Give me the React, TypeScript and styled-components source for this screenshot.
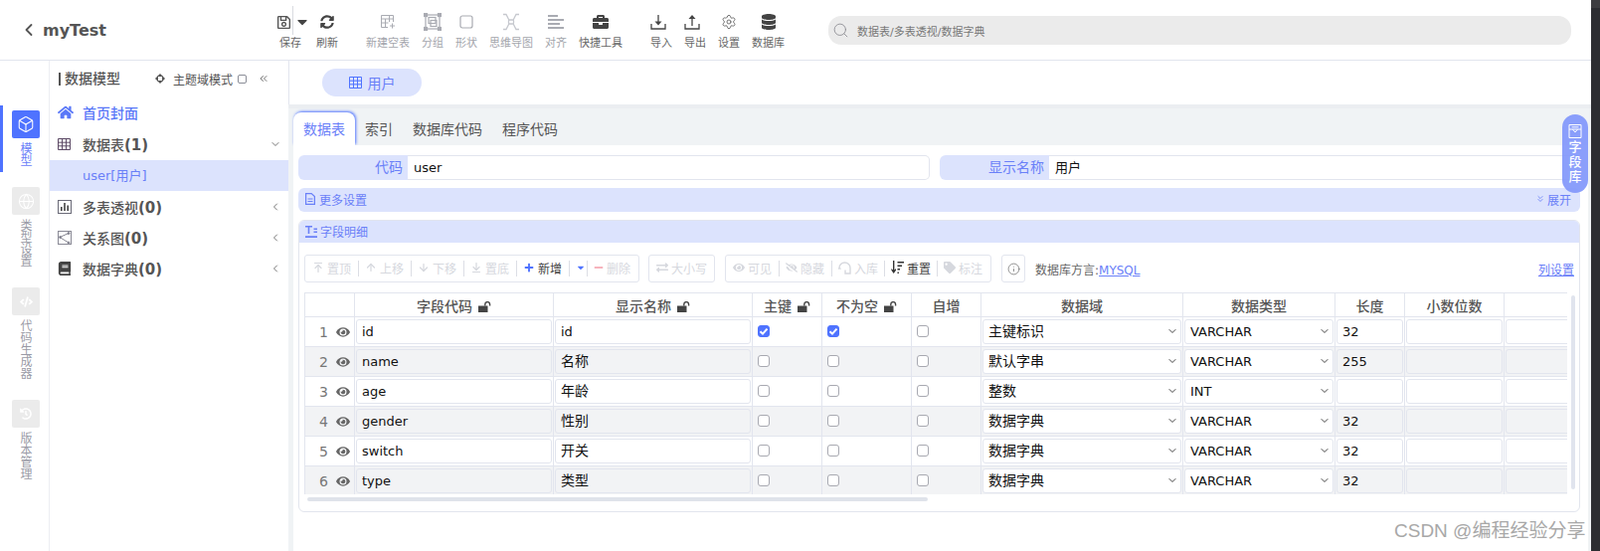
import React from "react";
import styled, { createGlobalStyle } from "styled-components";
import {
  FaHome, FaSyncAlt, FaBriefcase, FaDatabase, FaPlus, FaMinus, FaExchangeAlt, FaEye, FaEyeSlash,
  FaTag, FaBook, FaRegSave, FaCaretDown, FaCode, FaHistory,
} from "react-icons/fa";
import {
  ArrowUpToLine, ArrowUp, ArrowDown, ArrowDownToLine, Box, Globe, Info, Settings, Search, ChevronLeft, ChevronDown,
  ChevronsLeft, ChevronsDown,
} from "lucide-react";

const BLUE = "#4f73ff";
const SOFT = "#dce3fd";
const TEXTBLUE = "#6a80f8";
const LINE = "#e2e5ee";

const Global = createGlobalStyle`
  html, body { margin: 0; padding: 0; background: #fff; overflow: hidden; }
  body, input, select { font-family: "DejaVu Sans", "Noto Sans CJK SC", sans-serif; }
  * { box-sizing: border-box; }
`;

const Page = styled.div`
  display: flex;
  width: 1609px;
  height: 554px;
  position: relative;
  overflow: hidden;
`;
const Main = styled.div`
  width: 1600px;
  display: flex;
  flex-direction: column;
`;
const WindowEdge = styled.div`
  width: 9px;
  background: #2c2d31;
  border-top: 8px solid #3d3d40;
`;

/* ---------- header ---------- */
const Header = styled.header`
  height: 61px;
  flex: none;
  display: flex;
  align-items: flex-start;
  border-bottom: 1px solid ${LINE};
`;
const Brand = styled.div`
  width: 278px;
  height: 60px;
  padding-left: 19px;
  display: flex;
  align-items: center;
  gap: 4px;
  color: #555;
  font-size: 16px;
  font-weight: 700;
`;
const ToolRow = styled.div<{ $ml?: number }>`
  display: flex;
  gap: 12px;
  margin-left: ${(p) => p.$ml ?? 0}px;
  padding-top: 13px;
`;
const Tool = styled.div<{ $off?: boolean }>`
  display: flex;
  flex-direction: column;
  align-items: center;
  gap: 6px;
  color: ${(p) => (p.$off ? "#a9abb2" : "#444")};
  svg { display: block; }
`;
const ToolIcon = styled.div<{ $dx?: number }>`
  height: 18px;
  display: flex;
  align-items: center;
  justify-content: center;
  position: relative;
  margin-left: ${(p) => p.$dx ?? 0}px;
`;
const SaveDivider = styled.span`
  position: absolute;
  left: 16px;
  top: -7px;
  width: 1px;
  height: 29px;
  background: #d9dbe0;
`;
const ToolLabel = styled.span<{ $off?: boolean }>`
  font-size: 11px;
  line-height: 14px;
  white-space: nowrap;
  color: ${(p) => (p.$off ? "#a3a5ac" : "#666")};
`;
const SearchBar = styled.div`
  width: 747px;
  height: 29px;
  margin: 16px 0 0 44px;
  padding-left: 4px;
  border-radius: 13px;
  background: #ebebeb;
  display: flex;
  align-items: center;
  gap: 8px;
  color: #8a8a90;
  font-size: 11px;
  span { color: #777; }
`;

/* ---------- body ---------- */
const Body = styled.div`
  flex: 1;
  display: flex;
  min-height: 0;
`;
const Rail = styled.nav`
  width: 50px;
  flex: none;
  padding-top: 45px;
  border-right: 1px solid #eceef2;
  display: flex;
  flex-direction: column;
  gap: 10px;
`;
const RailItem = styled.div<{ $active?: boolean }>`
  padding: 5px 0 5px 3px;
  border-left: 3px solid ${(p) => (p.$active ? BLUE : "transparent")};
  display: flex;
  flex-direction: column;
  align-items: center;
  width: 46px;
  gap: 5px;
`;
const RailBox = styled.div<{ $active?: boolean }>`
  width: 28px;
  height: 28px;
  border-radius: 2px;
  background: ${(p) => (p.$active ? BLUE : "#ebebeb")};
  color: #fff;
  display: flex;
  align-items: center;
  justify-content: center;
`;
const RailLabel = styled.div<{ $active?: boolean }>`
  width: 12px;
  font-size: 12px;
  line-height: 12px;
  margin-left: 1px;
  color: ${(p) => (p.$active ? TEXTBLUE : "#9a9ba6")};
`;

const Side = styled.aside`
  width: 240px;
  flex: none;
`;
const SideHead = styled.div`
  height: 39px;
  padding: 0 0 3px 9px;
  display: flex;
  align-items: center;
  color: #555;
`;
const SideTitle = styled.div`
  font-size: 14px;
  font-weight: 500;
  padding-left: 4px;
  line-height: 13px;
  border-left: 2px solid #555;
  width: 97px;
`;
const ThemeToggle = styled.div`
  display: flex;
  align-items: center;
  font-size: 12px;
  color: #555;
  gap: 8px;
`;
const MiniCheck = styled.i`
  width: 9px;
  height: 9px;
  border: 1px solid #8b8e98;
  border-radius: 2px;
  margin-left: -3px;
`;
const Collapse = styled.div`
  margin-left: 11px;
  color: #777;
  display: flex;
`;
const MenuRow = styled.div<{ $home?: boolean; $sel?: boolean; $lift?: number }>`
  height: ${(p) => (p.$home ? 30 : 31)}px;
  display: flex;
  align-items: center;
  padding: 0 7px ${(p) => p.$lift ?? 0}px ${(p) => (p.$sel ? 33 : 8)}px;
  background: ${(p) => (p.$sel ? SOFT : "transparent")};
  color: ${(p) => (p.$home ? "#5a78f8" : p.$sel ? TEXTBLUE : "#555")};
  font-size: ${(p) => (p.$sel ? 13 : 14)}px;
  font-weight: ${(p) => (p.$sel ? 400 : 500)};
`;
const MenuIcon = styled.span`
  width: 25px;
  display: flex;
  align-items: center;
  flex: none;
`;
const MenuText = styled.span`
  flex: 1;
  b { font-size: 15px; font-weight: 700; }
`;

const Content = styled.main`
  flex: 1;
  min-width: 0;
  display: flex;
  flex-direction: column;
  background: #f0f3f5;
`;
const OpenBand = styled.div`
  height: 44px;
  flex: none;
  background: #fff;
  border-left: 1px solid ${LINE};
  padding: 8px 0 0 33px;
`;
const OpenPill = styled.div`
  width: 100px;
  height: 28px;
  border-radius: 14px;
  background: ${SOFT};
  color: ${TEXTBLUE};
  font-size: 14px;
  display: flex;
  align-items: center;
  justify-content: center;
  gap: 6px;
  svg { color: ${BLUE}; }
`;
const Tabs = styled.div`
  height: 41px;
  flex: none;
  padding: 8px 0 0 5px;
  display: flex;
  box-shadow: inset 0 4px 0 #ebeef1;
`;
const Tab = styled.div<{ $active?: boolean }>`
  height: 33px;
  padding: 0 10px 1px;
  display: flex;
  align-items: center;
  font-size: 14px;
  color: ${(p) => (p.$active ? TEXTBLUE : "#555")};
  background: ${(p) => (p.$active ? "#fff" : "transparent")};
  border-radius: ${(p) => (p.$active ? "8px 8px 0 0" : "0")};
  box-shadow: ${(p) => (p.$active ? `1px -1px 3px ${BLUE}` : "none")};
  width: ${(p) => (p.$active ? "62px" : "auto")};
`;
const Panel = styled.div`
  flex: 1;
  min-height: 0;
  margin: 0 3px 0 5px;
  background: #fff;
  padding: 10px 8px 0 5px;
  display: flex;
  flex-direction: column;
  gap: 8px;
  position: relative;
`;
const FormRow = styled.div`
  display: flex;
  gap: 10px;
  height: 25px;
`;
const Field = styled.div<{ $w?: number }>`
  display: flex;
  ${(p) => (p.$w ? `width:${p.$w}px;` : "flex:1;")}
`;
const FieldLabel = styled.label`
  width: 110px;
  flex: none;
  padding-right: 5px;
  background: ${SOFT};
  color: ${TEXTBLUE};
  border-radius: 6px 0 0 6px;
  font-size: 14px;
  line-height: 25px;
  text-align: right;
`;
const FieldInput = styled.input<{ $cjk?: boolean }>`
  flex: 1;
  min-width: 0;
  height: 25px;
  border: 1px solid ${LINE};
  border-left: 0;
  border-radius: 0 5px 5px 0;
  padding: 0 6px ${(p) => (p.$cjk ? 3 : 0)}px;
  font-size: 13px;
  color: #111;
  outline: none;
`;
const Strip = styled.div`
  height: 24px;
  background: ${SOFT};
  border-radius: 6px;
  padding: 0 9px 2px 7px;
  display: flex;
  align-items: center;
  gap: 4px;
  font-size: 12px;
  color: ${TEXTBLUE};
`;
const StripEnd = styled.span`
  margin-left: auto;
  display: flex;
  align-items: center;
  gap: 2px;
`;
const Section = styled.section`
  height: 294px;
  border: 1px solid ${LINE};
  border-radius: 6px;
  overflow: hidden;
`;
const SectionHead = styled.div`
  height: 22px;
  background: ${SOFT};
  padding: 0 0 1px 6px;
  display: flex;
  align-items: center;
  gap: 3px;
  font-size: 12px;
  color: ${TEXTBLUE};
`;
const Actions = styled.div`
  margin: 12px 5px 10px 5px;
  height: 28px;
  display: flex;
  align-items: center;
  > * { flex: none; }
`;
const BtnGroup = styled.div<{ $ml?: number }>`
  height: 28px;
  border: 1px solid ${LINE};
  border-radius: 3px;
  margin-left: ${(p) => p.$ml ?? 0}px;
  display: flex;
  align-items: center;
`;
const Btn = styled.div<{ $on?: boolean; $w?: number }>`
  width: ${(p) => p.$w ?? 53}px;
  flex: none;
  height: 16px;
  padding: 0 0 2px 7px;
  display: flex;
  align-items: center;
  gap: 3px;
  font-size: 12px;
  white-space: nowrap;
  color: ${(p) => (p.$on ? "#444" : "#d6d8de")};
  svg { flex: none; }
  & + & {
    border-left: 1px solid #dcdee5;
    padding-left: 6px;
  }
`;
const PlusMark = styled.span<{ $slot?: number }>`
  display: flex;
  justify-content: center;
  flex: none;
  width: ${(p) => p.$slot ?? 12}px;
  color: ${BLUE};
`;
const MinusMark = styled.span`
  display: flex;
  flex: none;
  color: #f7b4bd;
`;
const InfoBtn = styled.div`
  width: 24px;
  height: 28px;
  margin-left: 10px;
  border: 1px solid ${LINE};
  border-radius: 3px;
  display: flex;
  align-items: center;
  justify-content: center;
  color: #777;
`;
const Dialect = styled.div`
  margin-left: 10px;
  font-size: 12px;
  color: #666;
`;
const LinkText = styled.a`
  color: ${TEXTBLUE};
  text-decoration: underline;
`;
const ColSetting = styled(LinkText)`
  margin-left: auto;
  font-size: 12px;
`;
const TableArea = styled.div`
  position: relative;
  margin-left: 5px;
  height: 212px;
`;
const TableClip = styled.div`
  width: 1270px;
  height: 203px;
  overflow: hidden;
`;
const Grid = styled.table`
  table-layout: fixed;
  border-collapse: collapse;
  width: 1310px;
`;
const Th = styled.th`
  height: 24px;
  padding: 0;
  border: 1px solid ${LINE};
  font-size: 14px;
  font-weight: 500;
  color: #555;
  text-align: center;
  svg { margin-left: 6px; vertical-align: -1px; }
`;
const Tr = styled.tr<{ $alt?: boolean }>`
  height: 30px;
  background: ${(p) => (p.$alt ? "#f2f3f5" : "#fff")};
`;
const Td = styled.td`
  padding: 0 1px;
  border: 1px solid ${LINE};
  vertical-align: middle;
`;
const IndexCell = styled.div`
  display: flex;
  align-items: center;
  justify-content: flex-end;
  gap: 8px;
  padding-right: 3px;
  color: #777;
  font-size: 14px;
`;
const CellInput = styled.input<{ $alt?: boolean; $latin?: boolean }>`
  display: block;
  width: 100%;
  height: 25px;
  padding: 0 5px ${(p) => (p.$latin ? 0 : 3)}px;
  border: 1px solid ${LINE};
  border-radius: 3px;
  outline: none;
  background: ${(p) => (p.$alt ? "#f2f3f5" : "#fff")};
  color: #111;
  font-size: ${(p) => (p.$latin ? 13 : 14)}px;
  font-family: ${(p) => (p.$latin ? `"DejaVu Sans", sans-serif` : `"Noto Sans CJK SC", sans-serif`)};
`;
const SelectBox = styled.div`
  position: relative;
  svg {
    position: absolute;
    right: 3px;
    top: 6px;
    color: #444;
    pointer-events: none;
  }
`;
const CellSelect = styled.select<{ $latin?: boolean }>`
  display: block;
  width: 100%;
  height: 25px;
  padding: 0 5px ${(p) => (p.$latin ? 0 : 3)}px;
  border: 1px solid ${LINE};
  border-radius: 3px;
  outline: none;
  appearance: none;
  background-color: #fff;
  color: #111;
  font-size: ${(p) => (p.$latin ? 13 : 14)}px;
  font-family: ${(p) => (p.$latin ? `"DejaVu Sans", sans-serif` : `"Noto Sans CJK SC", sans-serif`)};
`;
const Check = styled.span<{ $on?: boolean }>`
  width: 12px;
  height: 12px;
  margin: -2px 0 0 4px;
  display: flex;
  align-items: center;
  justify-content: center;
  border-radius: 3px;
  background: ${(p) => (p.$on ? BLUE : "#fff")};
  border: 1px solid ${(p) => (p.$on ? BLUE : "#a8a9b1")};
`;
const ThumbH = styled.div`
  position: absolute;
  left: 3px;
  top: 206px;
  width: 624px;
  height: 4px;
  border-radius: 2px;
  background: #dfe3ea;
`;
const ThumbV = styled.div`
  position: absolute;
  left: 1274px;
  top: 3px;
  width: 4px;
  height: 195px;
  border-radius: 2px;
  background: #e0e4ee;
`;
const FieldTag = styled.div`
  position: absolute;
  left: 1571px;
  top: 115px;
  width: 26px;
  height: 79px;
  border-radius: 13px;
  background: rgba(129, 151, 251, 0.92);
  color: #fff;
  display: flex;
  flex-direction: column;
  align-items: center;
  padding-top: 10px;
  gap: 1px;
  font-size: 13px;
  line-height: 15px;
  font-weight: 500;
`;
const TagText = styled.div`
  width: 13px;
`;
const Watermark = styled.div`
  position: absolute;
  left: 1402px;
  top: 521px;
  font-size: 19px;
  line-height: 26px;
  color: #a8a8a8;
  white-space: nowrap;
  font-family: "Liberation Sans", "Noto Sans CJK SC", sans-serif;
`;

/* ---------- drawn icons ---------- */
const NewTableIcon = () => (
  <svg width="16" height="16" viewBox="0 0 16 16" fill="none" stroke="currentColor" strokeWidth="1">
    <path d="M13.5 8V1.5h-12v12H8M1.5 5h12M1.5 9h7M5.5 5v8.5M9.5 1.5V8M12.5 9.5v5M10 12h5" />
  </svg>
);
const GroupIcon = () => (
  <svg width="18" height="18" viewBox="0 0 18 18" fill="none" stroke="currentColor" strokeWidth="1.2">
    <rect x="2" y="2" width="14" height="14" />
    <rect x="5" y="4.5" width="7" height="6" />
    <rect x="7" y="7.5" width="6" height="6" />
    <g fill="currentColor">
      <rect x="0.5" y="0.5" width="3" height="3" />
      <rect x="14.5" y="0.5" width="3" height="3" />
      <rect x="0.5" y="14.5" width="3" height="3" />
      <rect x="14.5" y="14.5" width="3" height="3" />
    </g>
  </svg>
);
const ShapeIcon = () => (
  <svg width="14" height="14" viewBox="0 0 14 14" fill="none" stroke="currentColor" strokeWidth="1.2">
    <rect x="1" y="1" width="12" height="12" rx="2" />
  </svg>
);
const MindIcon = () => (
  <svg width="18" height="18" viewBox="0 0 18 18" fill="none" stroke="#c6c8ce" strokeWidth="1.3">
    <rect x="6.5" y="7" width="5" height="4" rx="1" />
    <path d="M1 1.5h3l2.8 5.5M17 1.5h-3l-2.8 5.5M1 16.5h3L6.8 11M17 16.5h-3L11.2 11" />
  </svg>
);
const AlignIcon = () => (
  <svg width="16" height="14" viewBox="0 0 16 14" fill="currentColor">
    <rect x="0" y="0" width="10" height="2" />
    <rect x="0" y="4" width="16" height="2" />
    <rect x="0" y="8" width="12" height="2" />
    <rect x="0" y="12" width="16" height="2" />
  </svg>
);
const ImportIcon = () => (
  <svg width="16" height="16" viewBox="0 0 16 16" fill="none" stroke="currentColor" strokeWidth="1.3">
    <path d="M1 10v5h14v-5" />
    <path d="M8 1v8" />
    <path d="M4.5 7.5h7L8 11.5z" fill="currentColor" stroke="none" />
  </svg>
);
const ExportIcon = () => (
  <svg width="16" height="16" viewBox="0 0 16 16" fill="none" stroke="currentColor" strokeWidth="1.3">
    <path d="M1 10v5h14v-5" />
    <path d="M8 12V4" />
    <path d="M4.5 5h7L8 1z" fill="currentColor" stroke="none" />
  </svg>
);
const ChartIcon = () => (
  <svg width="14" height="14" viewBox="0 0 14 14" fill="none" stroke="#6b6b78">
    <rect x="0.5" y="0.5" width="13" height="13" />
    <path d="M3 11V7h1.6v4zM6.2 11V3h1.6v8zM9.4 11V5.5H11V11z" fill="#444" stroke="none" />
  </svg>
);
const RelationIcon = () => (
  <svg width="14" height="14" viewBox="0 0 14 14" fill="none" stroke="#8a8a96">
    <rect x="0.5" y="0.5" width="13" height="13" />
    <path d="M2 6.5L11 2.5M2 6.5l9 5.5" />
    <circle cx="2.5" cy="6.5" r="1" fill="#7a7a86" />
    <circle cx="11" cy="2.5" r="1" fill="#7a7a86" />
    <circle cx="11" cy="12" r="1" fill="#7a7a86" />
  </svg>
);
const TableIcon = () => (
  <svg width="13" height="12" viewBox="0 0 13 12" fill="none" stroke="#5d4a66">
    <path d="M.5.5h12v11H.5zM.5 4.2h12M.5 7.8h12M4.5.5v11M8.5.5v11" />
  </svg>
);
const BlueTable = () => (
  <svg width="13" height="12" viewBox="0 0 13 12" fill="none" stroke="currentColor">
    <path d="M.5.5h12v11H.5zM.5 4.2h12M.5 7.8h12M4.5.5v11M8.5.5v11" />
  </svg>
);
const MoveIcon = () => (
  <svg width="10" height="10" viewBox="0 0 10 10" fill="#555">
    <path d="M5 0l2 2H3zM5 10l2-2H3zM0 5l2-2v4zM10 5L8 3v4z" />
    <path d="M2.5 2.5h5v5h-5z" fill="none" stroke="#555" />
  </svg>
);
const DocIcon = () => (
  <svg width="10" height="12" viewBox="0 0 10 12" fill="none" stroke="currentColor" strokeWidth="1.2">
    <path d="M.6.6h5.6l3.2 3v7.8H.6zM2.5 6h5M2.5 8.5h5" />
  </svg>
);
const HeadingIcon = () => (
  <svg width="12" height="12" viewBox="0 0 12 12" fill="currentColor">
    <path d="M0 0h7v1.6H4.3V8H2.7V1.6H0zM8.5 2.5H12v1.4H8.5zM8.5 5.5H12v1.4H8.5zM0 10.2h12V12H0z" />
  </svg>
);
const ResetIcon = () => (
  <svg width="13" height="14" viewBox="0 0 13 14" fill="#333">
    <path d="M2 0h1.4v9.5L5 8v1.8L2.7 13 .4 9.8V8L2 9.5zM6.5 1H13v1.6H6.5zM6.5 4.5H11v1.6H6.5zM6.5 8H9v1.6H6.5zM6.5 11.4h1.4V13H6.5z" />
  </svg>
);
const StoreIcon = () => (
  <svg width="13" height="13" viewBox="0 0 13 13" fill="none" stroke="currentColor" strokeWidth="1.4">
    <path d="M1 6.5a5.5 5.5 0 0 1 11 0M1 6.5l-1 1M1 6.5l1.6 1M12 6.5V12H7V8.5" />
  </svg>
);
const InboxIcon = () => (
  <svg width="14" height="14" viewBox="0 0 14 14" fill="none" stroke="#fff" strokeWidth="1">
    <path d="M1 .5h12v13H1zM1 5h12M4.5 5l2.5 3 2.5-3M3.5 2.8h7" />
  </svg>
);
const Tick = () => (
  <svg width="10" height="10" viewBox="0 0 10 10" fill="none" stroke="#fff" strokeWidth="2">
    <path d="M1.5 5.2l2.5 2.4 4.5-5" />
  </svg>
);
const Lock = () => (
  <svg width="13" height="11" viewBox="0 0 13 11" fill="#444">
    <path d="M0 4.5h9.5V11H0z" />
    <path d="M6.8 4.5V3a2.4 2.4 0 0 1 4.8 0v1.6" fill="none" stroke="#444" strokeWidth="1.4" />
  </svg>
);

/* ---------- data ---------- */
const latin = (s: string) => /^[\x00-\x7f]*$/.test(s);
const rows = [
  { code: "id", name: "id", pk: true, nn: true, domain: "主键标识", type: "VARCHAR", len: "32" },
  { code: "name", name: "名称", domain: "默认字串", type: "VARCHAR", len: "255" },
  { code: "age", name: "年龄", domain: "整数", type: "INT", len: "" },
  { code: "gender", name: "性别", domain: "数据字典", type: "VARCHAR", len: "32" },
  { code: "switch", name: "开关", domain: "数据字典", type: "VARCHAR", len: "32" },
  { code: "type", name: "类型", domain: "数据字典", type: "VARCHAR", len: "32" },
];
const cols = [50, 200, 200, 70, 90, 70, 203, 153, 70, 100, 104];
const heads: [string, boolean][] = [
  ["", false], ["字段代码", true], ["显示名称", true], ["主键", true], ["不为空", true], ["自增", false],
  ["数据域", false], ["数据类型", false], ["长度", false], ["小数位数", false], ["", false],
];

export default function App() {
  return (
    <Page>
      <Global />
      <Main>
        <Header>
          <Brand>
            <ChevronLeft size={20} strokeWidth={2.2} />
            <span>myTest</span>
          </Brand>
          <ToolRow>
            <Tool>
              <ToolIcon>
                <FaRegSave size={15} color="#555" />
                <SaveDivider />
                <FaCaretDown size={16} color="#444" style={{ marginLeft: 3, marginRight: -6 }} />
              </ToolIcon>
              <ToolLabel>保存</ToolLabel>
            </Tool>
            <Tool>
              <ToolIcon><FaSyncAlt size={14} /></ToolIcon>
              <ToolLabel>刷新</ToolLabel>
            </Tool>
          </ToolRow>
          <ToolRow $ml={28}>
            <Tool $off><ToolIcon><NewTableIcon /></ToolIcon><ToolLabel $off>新建空表</ToolLabel></Tool>
            <Tool $off><ToolIcon><GroupIcon /></ToolIcon><ToolLabel $off>分组</ToolLabel></Tool>
            <Tool $off><ToolIcon><ShapeIcon /></ToolIcon><ToolLabel $off>形状</ToolLabel></Tool>
            <Tool $off><ToolIcon><MindIcon /></ToolIcon><ToolLabel $off>思维导图</ToolLabel></Tool>
            <Tool $off><ToolIcon><AlignIcon /></ToolIcon><ToolLabel $off>对齐</ToolLabel></Tool>
            <Tool><ToolIcon><FaBriefcase size={16} /></ToolIcon><ToolLabel>快捷工具</ToolLabel></Tool>
          </ToolRow>
          <ToolRow $ml={28}>
            <Tool><ToolIcon $dx={-6}><ImportIcon /></ToolIcon><ToolLabel>导入</ToolLabel></Tool>
            <Tool><ToolIcon $dx={-6}><ExportIcon /></ToolIcon><ToolLabel>导出</ToolLabel></Tool>
            <Tool><ToolIcon><Settings size={16} strokeWidth={1.2} color="#555" /></ToolIcon><ToolLabel>设置</ToolLabel></Tool>
            <Tool><ToolIcon><FaDatabase size={16} /></ToolIcon><ToolLabel>数据库</ToolLabel></Tool>
          </ToolRow>
          <SearchBar>
            <Search size={17} strokeWidth={1.2} />
            <span>数据表/多表透视/数据字典</span>
          </SearchBar>
        </Header>
        <Body>
          <Rail>
            <RailItem $active>
              <RailBox $active><Box size={18} strokeWidth={1.4} /></RailBox>
              <RailLabel $active>模型</RailLabel>
            </RailItem>
            <RailItem>
              <RailBox><Globe size={17} strokeWidth={1.5} /></RailBox>
              <RailLabel>类型设置</RailLabel>
            </RailItem>
            <RailItem>
              <RailBox><FaCode size={13} /></RailBox>
              <RailLabel>代码生成器</RailLabel>
            </RailItem>
            <RailItem>
              <RailBox><FaHistory size={12} /></RailBox>
              <RailLabel>版本管理</RailLabel>
            </RailItem>
          </Rail>
          <Side>
            <SideHead>
              <SideTitle>数据模型</SideTitle>
              <ThemeToggle>
                <MoveIcon />
                <span>主题域模式</span>
                <MiniCheck />
              </ThemeToggle>
              <Collapse><ChevronsLeft size={12} /></Collapse>
            </SideHead>
            <MenuRow $home $lift={4}>
              <MenuIcon><FaHome size={16} color="#5a78f8" /></MenuIcon>
              <MenuText>首页封面</MenuText>
            </MenuRow>
            <MenuRow $lift={1}>
              <MenuIcon><TableIcon /></MenuIcon>
              <MenuText>数据表<b>(1)</b></MenuText>
              <ChevronDown size={12} color="#777" />
            </MenuRow>
            <MenuRow $sel $lift={2}>user[用户]</MenuRow>
            <MenuRow>
              <MenuIcon><ChartIcon /></MenuIcon>
              <MenuText>多表透视<b>(0)</b></MenuText>
              <ChevronLeft size={12} color="#777" />
            </MenuRow>
            <MenuRow>
              <MenuIcon><RelationIcon /></MenuIcon>
              <MenuText>关系图<b>(0)</b></MenuText>
              <ChevronLeft size={12} color="#777" />
            </MenuRow>
            <MenuRow>
              <MenuIcon><FaBook size={14} color="#444" /></MenuIcon>
              <MenuText>数据字典<b>(0)</b></MenuText>
              <ChevronLeft size={12} color="#777" />
            </MenuRow>
          </Side>
          <Content>
            <OpenBand>
              <OpenPill><BlueTable /><span>用户</span></OpenPill>
            </OpenBand>
            <Tabs>
              <Tab $active>数据表</Tab>
              <Tab>索引</Tab>
              <Tab>数据库代码</Tab>
              <Tab>程序代码</Tab>
            </Tabs>
            <Panel>
              <FormRow>
                <Field $w={635}>
                  <FieldLabel>代码</FieldLabel>
                  <FieldInput defaultValue="user" />
                </Field>
                <Field>
                  <FieldLabel>显示名称</FieldLabel>
                  <FieldInput $cjk defaultValue="用户" />
                </Field>
              </FormRow>
              <Strip>
                <DocIcon />
                <span>更多设置</span>
                <StripEnd><ChevronsDown size={10} />展开</StripEnd>
              </Strip>
              <Section>
                <SectionHead><HeadingIcon /><span>字段明细</span></SectionHead>
                <Actions>
                  <BtnGroup>
                    <Btn><ArrowUpToLine size={12} strokeWidth={2.4} />置顶</Btn>
                    <Btn><ArrowUp size={12} strokeWidth={2.4} />上移</Btn>
                    <Btn><ArrowDown size={12} strokeWidth={2.4} />下移</Btn>
                    <Btn><ArrowDownToLine size={12} strokeWidth={2.4} />置底</Btn>
                    <Btn $on><PlusMark><FaPlus size={10} /></PlusMark>新增</Btn>
                    <Btn $w={18}><PlusMark $slot={10}><FaCaretDown size={10} /></PlusMark></Btn>
                    <Btn $w={52}><MinusMark><FaMinus size={10} /></MinusMark>删除</Btn>
                  </BtnGroup>
                  <BtnGroup $ml={9}>
                    <Btn $w={65}><FaExchangeAlt size={12} />大小写</Btn>
                  </BtnGroup>
                  <BtnGroup $ml={10}>
                    <Btn><FaEye size={12} />可见</Btn>
                    <Btn><FaEyeSlash size={12} />隐藏</Btn>
                    <Btn><StoreIcon />入库</Btn>
                    <Btn $on><ResetIcon />重置</Btn>
                    <Btn $w={54}><FaTag size={12} />标注</Btn>
                  </BtnGroup>
                  <InfoBtn><Info size={13} strokeWidth={1.5} /></InfoBtn>
                  <Dialect>数据库方言:<LinkText>MYSQL</LinkText></Dialect>
                  <ColSetting>列设置</ColSetting>
                </Actions>
                <TableArea>
                  <TableClip>
                    <Grid>
                      <colgroup>
                        {cols.map((w, i) => <col key={i} style={{ width: w }} />)}
                      </colgroup>
                      <thead>
                        <tr>
                          {heads.map(([h, locked], i) => (
                            <Th key={i}>{h}{locked && <Lock />}</Th>
                          ))}
                        </tr>
                      </thead>
                      <tbody>
                        {rows.map((r, i) => {
                          const alt = i % 2 === 1;
                          return (
                            <Tr key={r.code} $alt={alt}>
                              <Td>
                                <IndexCell><span>{i + 1}</span><FaEye size={14} color="#666" /></IndexCell>
                              </Td>
                              <Td><CellInput $alt={alt} $latin={latin(r.code)} defaultValue={r.code} /></Td>
                              <Td><CellInput $alt={alt} $latin={latin(r.name)} defaultValue={r.name} /></Td>
                              <Td><Check $on={r.pk}>{r.pk && <Tick />}</Check></Td>
                              <Td><Check $on={r.nn}>{r.nn && <Tick />}</Check></Td>
                              <Td><Check /></Td>
                              <Td>
                                <SelectBox>
                                  <CellSelect defaultValue={r.domain}><option>{r.domain}</option></CellSelect>
                                  <ChevronDown size={12} strokeWidth={2} />
                                </SelectBox>
                              </Td>
                              <Td>
                                <SelectBox>
                                  <CellSelect $latin defaultValue={r.type}><option>{r.type}</option></CellSelect>
                                  <ChevronDown size={12} strokeWidth={2} />
                                </SelectBox>
                              </Td>
                              <Td><CellInput $alt={alt} $latin defaultValue={r.len} /></Td>
                              <Td><CellInput $alt={alt} $latin /></Td>
                              <Td><CellInput $alt={alt} $latin /></Td>
                            </Tr>
                          );
                        })}
                      </tbody>
                    </Grid>
                  </TableClip>
                  <ThumbH />
                  <ThumbV />
                </TableArea>
              </Section>
            </Panel>
          </Content>
        </Body>
      </Main>
      <WindowEdge />
      <FieldTag>
        <InboxIcon />
        <TagText>字段库</TagText>
      </FieldTag>
      <Watermark>CSDN @编程经验分享</Watermark>
    </Page>
  );
}
